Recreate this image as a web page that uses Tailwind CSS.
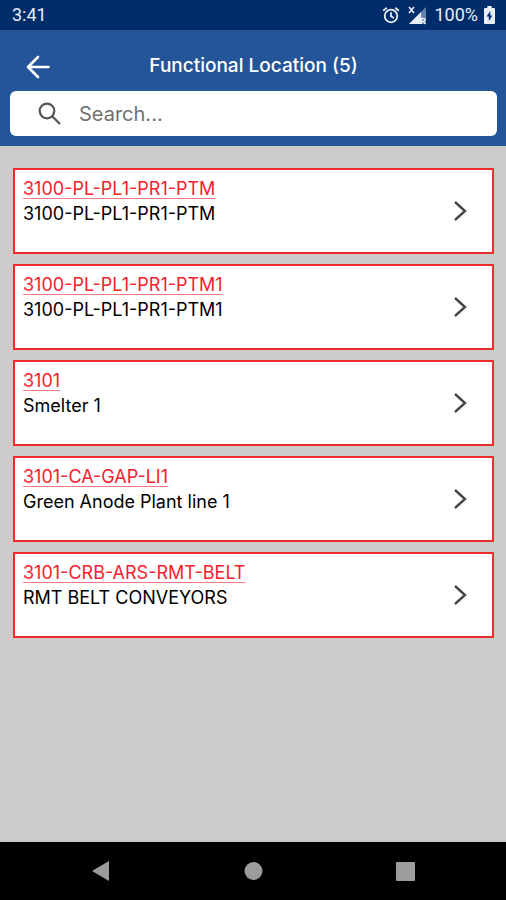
<!DOCTYPE html>
<html lang="en">
<head>
<meta charset="utf-8">
<meta name="viewport" content="width=device-width, initial-scale=1">
<title>Functional Location</title>
<script src="https://cdn.jsdelivr.net/npm/@tailwindcss/browser@4"></script>
</head>
<body class="flex min-h-screen flex-col bg-[#cbcbcb] font-['Inter',sans-serif] text-black">
  <div class="flex h-[30px] items-center justify-between bg-[#002c69] pr-[11px] pl-3 font-['Roboto',sans-serif] text-lg text-[#e8edf6]">
    <span>3:41</span>
    <div class="flex items-center gap-2">
      <svg class="size-[18px]" viewBox="0 0 18 18" fill="none" stroke="currentColor" stroke-width="1.8" aria-hidden="true">
        <circle cx="9" cy="10" r="6.3"/>
        <path d="M9 6.3v4l2.8 1.8M1.2 4.7 4.8 1.7M16.8 4.7 13.2 1.7"/>
      </svg>
      <svg class="h-[19px] w-[18px]" viewBox="0 0 18 19" aria-hidden="true">
        <path d="M18 1v17H1z" fill="#5f84b4"/>
        <path d="M13 6v12H1z" fill="currentColor"/>
        <path d="M1 1l5 6M6 1 1 7" stroke="currentColor" stroke-width="1.6"/>
        <path d="M13.5 18v-5.500h2.200a1.500 1.500 0 0 1 0 3h-2.200m2 0 1.800 2.500" fill="none" stroke="currentColor" stroke-width="1.4"/>
      </svg>
      <span>100%</span>
      <svg class="-ml-0.5 h-[18px] w-[11px]" viewBox="0 0 11 18" aria-hidden="true">
        <path d="M3.3 0h4.4v2H10a1 1 0 0 1 1 1v14a1 1 0 0 1-1 1H1a1 1 0 0 1-1-1V3a1 1 0 0 1 1-1h2.3z" fill="currentColor"/>
        <path d="M6.3 5 2.5 10.5h2.300V15l3.700-5.600H6.300z" fill="#002c69"/>
      </svg>
    </div>
  </div>

  <header class="bg-[#245599] pr-[9px] pb-2.5 pl-2.5">
    <div class="grid h-[61px] grid-cols-[1fr_auto_1fr] items-center pt-3">
      <button type="button" aria-label="Back" class="ml-4 size-6 text-white">
        <svg class="size-6" viewBox="0 0 24 24" fill="none" stroke="currentColor" stroke-width="2.6" stroke-linecap="round" stroke-linejoin="round" aria-hidden="true"><path d="M22.500 12H2M12 2 2 12l10 10"/></svg>
      </button>
      <h1 class="text-[19px] font-medium text-white">Functional Location (5)</h1>
    </div>
    <label class="flex h-[45px] items-center gap-[17px] rounded-md bg-white pr-3 pl-7">
      <svg class="size-6 shrink-0 text-[#555]" viewBox="0 0 24 24" fill="none" stroke="currentColor" stroke-width="2.2" aria-hidden="true"><circle cx="9" cy="9" r="7.3"/><path d="M14.200 14.200 22 22"/></svg>
      <input type="search" aria-label="Search" placeholder="Search..." class="w-full min-w-0 bg-transparent text-xl outline-none placeholder:text-[#707070]">
    </label>
  </header>

  <main class="flex-1 pt-[22px] pr-3 pb-6 pl-[13px]">
    <ul class="flex flex-col gap-2.5">
      <li class="flex h-[86px] justify-between border-2 border-[#ee2e2e] bg-white pr-6 pl-2">
        <div class="pt-1.5 text-lg leading-[25px]"><a href="#" class="block text-[#f5222d] underline decoration-[#f5222d]/60 decoration-1 underline-offset-3">3100-PL-PL1-PR1-PTM</a><p>3100-PL-PL1-PR1-PTM</p></div>
        <button type="button" aria-label="Open 3100-PL-PL1-PR1-PTM"><svg class="h-[22px] w-4" viewBox="0 0 16 22" fill="none" stroke="#484848" stroke-width="2.4" aria-hidden="true"><path d="M3 2l10 9L3 20"/></svg></button>
      </li>
      <li class="flex h-[86px] justify-between border-2 border-[#ee2e2e] bg-white pr-6 pl-2">
        <div class="pt-1.5 text-lg leading-[25px]"><a href="#" class="block text-[#f5222d] underline decoration-[#f5222d]/60 decoration-1 underline-offset-3">3100-PL-PL1-PR1-PTM1</a><p>3100-PL-PL1-PR1-PTM1</p></div>
        <button type="button" aria-label="Open 3100-PL-PL1-PR1-PTM1"><svg class="h-[22px] w-4" viewBox="0 0 16 22" fill="none" stroke="#484848" stroke-width="2.4" aria-hidden="true"><path d="M3 2l10 9L3 20"/></svg></button>
      </li>
      <li class="flex h-[86px] justify-between border-2 border-[#ee2e2e] bg-white pr-6 pl-2">
        <div class="pt-1.5 text-lg leading-[25px]"><a href="#" class="block text-[#f5222d] underline decoration-[#f5222d]/60 decoration-1 underline-offset-3">3101</a><p>Smelter 1</p></div>
        <button type="button" aria-label="Open 3101"><svg class="h-[22px] w-4" viewBox="0 0 16 22" fill="none" stroke="#484848" stroke-width="2.4" aria-hidden="true"><path d="M3 2l10 9L3 20"/></svg></button>
      </li>
      <li class="flex h-[86px] justify-between border-2 border-[#ee2e2e] bg-white pr-6 pl-2">
        <div class="pt-1.5 text-lg leading-[25px]"><a href="#" class="block text-[#f5222d] underline decoration-[#f5222d]/60 decoration-1 underline-offset-3">3101-CA-GAP-LI1</a><p>Green Anode Plant line 1</p></div>
        <button type="button" aria-label="Open 3101-CA-GAP-LI1"><svg class="h-[22px] w-4" viewBox="0 0 16 22" fill="none" stroke="#484848" stroke-width="2.4" aria-hidden="true"><path d="M3 2l10 9L3 20"/></svg></button>
      </li>
      <li class="flex h-[86px] justify-between border-2 border-[#ee2e2e] bg-white pr-6 pl-2">
        <div class="pt-1.5 text-lg leading-[25px]"><a href="#" class="block text-[#f5222d] underline decoration-[#f5222d]/60 decoration-1 underline-offset-3">3101-CRB-ARS-RMT-BELT</a><p>RMT BELT CONVEYORS</p></div>
        <button type="button" aria-label="Open 3101-CRB-ARS-RMT-BELT"><svg class="h-[22px] w-4" viewBox="0 0 16 22" fill="none" stroke="#484848" stroke-width="2.4" aria-hidden="true"><path d="M3 2l10 9L3 20"/></svg></button>
      </li>
    </ul>
  </main>

  <nav aria-label="System" class="grid h-[58px] grid-cols-3 place-items-center bg-black px-[25px] text-[#9c9c9c]">
    <button type="button" aria-label="Back"><svg class="size-5" viewBox="0 0 20 20" fill="currentColor" aria-hidden="true"><path d="M18 0v20L1 10z"/></svg></button>
    <button type="button" aria-label="Home"><svg class="size-5" viewBox="0 0 20 20" fill="currentColor" aria-hidden="true"><circle cx="10.500" cy="10" r="9"/></svg></button>
    <button type="button" aria-label="Recent apps"><svg class="size-5" viewBox="0 0 20 20" fill="currentColor" aria-hidden="true"><rect x="1" y="1" width="19" height="19" rx="1"/></svg></button>
  </nav>
</body>
</html>
